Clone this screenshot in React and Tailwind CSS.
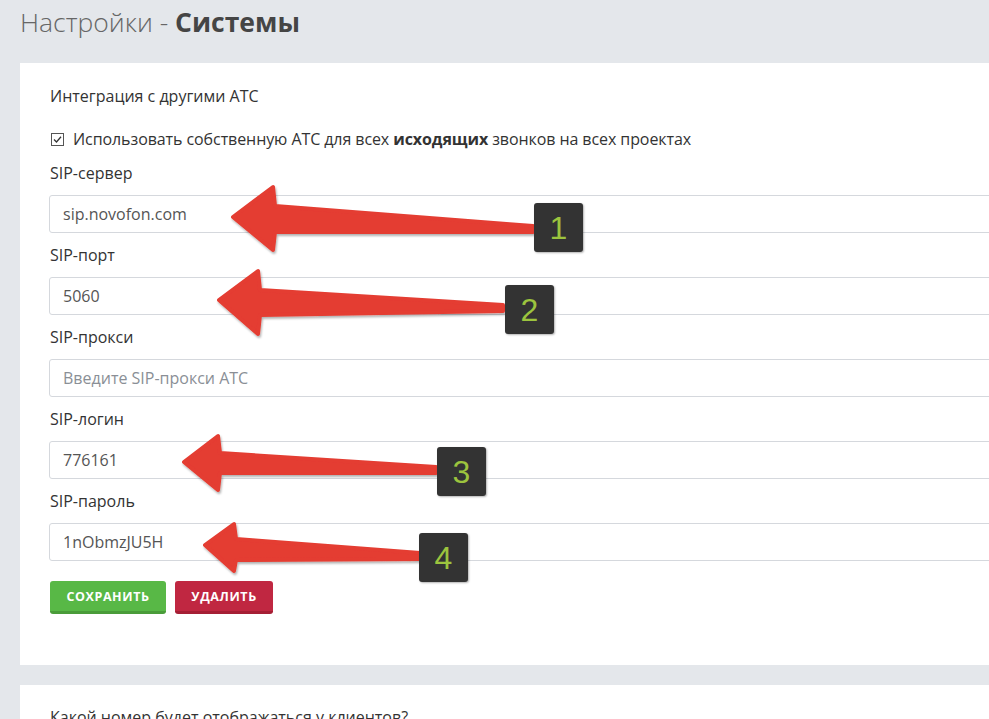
import React from "react";

const fields = [
  { label: "SIP-сервер", value: "sip.novofon.com" },
  { label: "SIP-порт", value: "5060" },
  { label: "SIP-прокси", value: "", placeholder: "Введите SIP-прокси АТС" },
  { label: "SIP-логин", value: "776161" },
  { label: "SIP-пароль", value: "1nObmzJU5H" },
];

const arrows = [
  { tip: [233, 217], ht: [273, 187], hb: [273, 250], st: [275, 206], sb: [275, 232], tt: [533, 226], tb: [533, 232] },
  { tip: [219, 300], ht: [258, 271], hb: [258, 334], st: [260, 290], sb: [260, 315], tt: [503, 305], tb: [503, 311] },
  { tip: [184, 462], ht: [218, 436], hb: [218, 490], st: [220, 453], sb: [220, 473], tt: [436, 467], tb: [436, 473] },
  { tip: [205, 545], ht: [234, 524], hb: [234, 571], st: [236, 539], sb: [236, 560], tt: [420, 553], tb: [420, 559] },
];

const badges = [
  { n: "1", x: 534, y: 203 },
  { n: "2", x: 505, y: 285 },
  { n: "3", x: 437, y: 447 },
  { n: "4", x: 419, y: 533 },
];

function pts(a) {
  return [a.tip, a.ht, a.st, a.tt, a.tb, a.sb, a.hb].map((p) => p.join(",")).join(" ");
}

export default function App() {
  return (
    <div className="relative w-[989px] h-[719px] overflow-hidden bg-[#e4e7eb] font-['Open_Sans',sans-serif]">
      <h1 className="pl-5 pt-[4px] text-[26.5px] leading-[36px] font-light text-[#666]">
        Настройки - <span className="font-bold text-[#454545]">Системы</span>
      </h1>

      <div className="ml-5 mt-[23px] w-[1000px] bg-white pl-[30px] pt-[23px] pb-[51px] text-[#333]">
        <div className="text-[16px] leading-5">Интеграция с другими АТС</div>
        <div className="mt-[23px] flex items-center gap-[9px] text-[16px] leading-5">
          <svg width="13" height="13" viewBox="0 0 13 13" className="ml-px">
            <rect x="0.5" y="0.5" width="12" height="12" fill="white" stroke="#555" />
            <path d="M3 6.5 L5.5 9 L10 3.8" fill="none" stroke="#333" strokeWidth="1.3" />
          </svg>
          <span className="tracking-[-0.08px]">
            Использовать собственную АТС для всех <b className="font-bold">исходящих</b> звонков на всех проектах
          </span>
        </div>
        <div className="mt-[14px] flex flex-col gap-3">
          {fields.map((f) => (
            <div key={f.label} className="flex flex-col gap-3">
              <div className="text-[16px] leading-5">{f.label}</div>
              <div className="-ml-px flex h-[38px] w-[960px] items-center rounded-[3px] border border-[#d5d8dd] px-[13px] text-[16px] text-[#555]">
                {f.value ? f.value : <span className="text-[#8a8f96]">{f.placeholder}</span>}
              </div>
            </div>
          ))}
        </div>
        <div className="mt-5 flex gap-[9px]">
          <button className="h-[33px] w-[116px] rounded-[3px] border-b-[3px] border-[#4a9c3a] bg-[#58b846] pt-[3px] text-[12.5px] font-bold tracking-[0.6px] text-white">
            СОХРАНИТЬ
          </button>
          <button className="h-[33px] w-[98px] rounded-[3px] border-b-[3px] border-[#a51f35] bg-[#c02741] pt-[3px] text-[12.5px] font-bold tracking-[0.6px] text-white">
            УДАЛИТЬ
          </button>
        </div>
      </div>

      <div className="ml-5 mt-5 w-[1000px] bg-white pl-[30px] pt-[22px] pb-10 text-[#333]">
        <div className="text-[16px] leading-5">Какой номер будет отображаться у клиентов?</div>
      </div>

      <svg className="pointer-events-none absolute left-0 top-0" width="989" height="719">
        <defs>
          <filter id="sh" x="-10%" y="-20%" width="120%" height="140%">
            <feDropShadow dx="1" dy="2" stdDeviation="1" floodColor="#000" floodOpacity="0.3" />
          </filter>
        </defs>
        {arrows.map((a, i) => (
          <polygon
            key={i}
            points={pts(a)}
            fill="#e43c31"
            stroke="#e43c31"
            strokeWidth="4"
            strokeLinejoin="round"
            filter="url(#sh)"
          />
        ))}
      </svg>

      {badges.map((b) => (
        <div
          key={b.n}
          className="absolute flex h-[49px] w-[49px] items-center justify-center rounded-[3px] bg-[#333] font-['Liberation_Sans',Arial,sans-serif] text-[32px] text-[#9cc43e] shadow-[1px_1px_2px_rgba(0,0,0,0.3)]"
          style={{ left: b.x, top: b.y }}
        >
          {b.n}
        </div>
      ))}
    </div>
  );
}
